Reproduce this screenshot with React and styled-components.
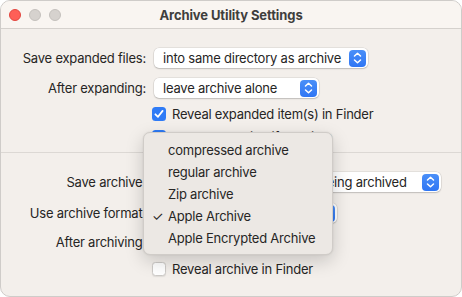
import React from "react";
import styled, { createGlobalStyle } from "styled-components";

const Global = createGlobalStyle`
  html, body {
    margin: 0;
    padding: 0;
    background: #ffffff;
  }
  body {
    font-family: "Inter", "Noto Sans", sans-serif;
    -webkit-font-smoothing: antialiased;
  }
`;

function Stepper() {
  return (
    <StepIcon>
      <svg width="17" height="18" viewBox="0 0 17 18">
        <path
          d="M5.5 7 L8.5 4.2 L11.5 7"
          fill="none"
          stroke="#fff"
          strokeWidth="1.5"
          strokeLinecap="round"
          strokeLinejoin="round"
        />
        <path
          d="M5.5 11 L8.5 13.8 L11.5 11"
          fill="none"
          stroke="#fff"
          strokeWidth="1.5"
          strokeLinecap="round"
          strokeLinejoin="round"
        />
      </svg>
    </StepIcon>
  );
}

function Popup({ width, children }) {
  return (
    <PopupButton $width={width}>
      <span>{children}</span>
      <Stepper />
    </PopupButton>
  );
}

function Check({ checked, children }) {
  return (
    <CheckRow>
      <Box $checked={checked}>
        {checked && (
          <svg width="14" height="14" viewBox="0 0 14 14">
            <path
              d="M3.4 7.3 L6 9.8 L10.6 3.9"
              fill="none"
              stroke="#fff"
              strokeWidth="1.8"
              strokeLinecap="round"
              strokeLinejoin="round"
            />
          </svg>
        )}
      </Box>
      <span>{children}</span>
    </CheckRow>
  );
}

const formats = [
  "compressed archive",
  "regular archive",
  "Zip archive",
  "Apple Archive",
  "Apple Encrypted Archive",
];

export default function App() {
  return (
    <>
      <Global />
      <Window>
        <TitleBar>
          <Lights>
            <Light $color="#fe5f57" $border="#e2463f" />
            <Light $color="#d6d2ce" $border="#c4c0bc" />
            <Light $color="#d6d2ce" $border="#c4c0bc" />
          </Lights>
          <Title>Archive Utility Settings</Title>
        </TitleBar>

        <Body>
          <Row $top={19}>
            <Label>Save expanded files:</Label>
            <Popup width={214}>into same directory as archive</Popup>
          </Row>
          <Row $top={10}>
            <Label>After expanding:</Label>
            <Popup width={165}>leave archive alone</Popup>
          </Row>
          <Row $top={6}>
            <Label />
            <Check checked>Reveal expanded item(s) in Finder</Check>
          </Row>
          <Row $top={3}>
            <Label />
            <Check checked>Keep expanding if possible</Check>
          </Row>

          <Separator />

          <Row $top={19}>
            <Label>Save archive:</Label>
            <Popup width={287}>into same directory as file being archived</Popup>
          </Row>
          <Row $top={11}>
            <Label>Use archive format:</Label>
            <Popup width={183}>Apple Archive</Popup>
          </Row>
          <Row $top={9}>
            <Label>After archiving:</Label>
            <Popup width={150}>leave file alone</Popup>
          </Row>
          <Row $top={7}>
            <Label />
            <Check>Reveal archive in Finder</Check>
          </Row>
        </Body>

        <Menu>
          {formats.map((f) => (
            <MenuItem key={f}>
              <Tick>{f === "Apple Archive" ? "✓" : ""}</Tick>
              {f}
            </MenuItem>
          ))}
        </Menu>
      </Window>
    </>
  );
}

const Window = styled.div`
  position: relative;
  box-sizing: border-box;
  width: 462px;
  height: 297px;
  border: 1px solid #cfccc9;
  border-radius: 10px;
  background: #f3efeb;
  overflow: hidden;
  color: #262524;
  font-size: 13px;
  letter-spacing: -0.22px;
`;

const TitleBar = styled.div`
  position: relative;
  display: flex;
  align-items: center;
  justify-content: center;
  height: 27px;
  background: #f9f5f1;
  border-bottom: 1px solid #d5d1cd;
`;

const Lights = styled.div`
  position: absolute;
  left: 8px;
  top: 8px;
  display: flex;
  gap: 8px;
`;

const Light = styled.span`
  width: 12px;
  height: 12px;
  box-sizing: border-box;
  border-radius: 50%;
  background: ${(p) => p.$color};
  border: 0.5px solid ${(p) => p.$border};
`;

const Title = styled.div`
  font-weight: 700;
  font-size: 13px;
  letter-spacing: -0.1px;
  color: #3f3e3d;
`;

const Body = styled.div`
  display: flex;
  flex-direction: column;
`;

const Row = styled.div`
  display: flex;
  align-items: center;
  height: 20px;
  margin-top: ${(p) => p.$top}px;
`;

const Label = styled.div`
  width: 145px;
  flex-shrink: 0;
  margin-right: 8px;
  text-align: right;
  white-space: nowrap;
`;

const PopupButton = styled.div`
  box-sizing: border-box;
  width: ${(p) => p.$width}px;
  height: 20px;
  display: flex;
  align-items: center;
  justify-content: space-between;
  padding: 0 2px 0 9px;
  background: #ffffff;
  border-radius: 5px;
  box-shadow: 0 0 0 0.5px rgba(0, 0, 0, 0.12), 0 1px 1.5px rgba(0, 0, 0, 0.16);
  white-space: nowrap;
`;

const StepIcon = styled.span`
  display: flex;
  width: 17px;
  height: 17px;
  border-radius: 4px;
  background: linear-gradient(#4a8ff8, #2f76f4);
  align-items: center;
  justify-content: center;

  svg {
    display: block;
  }
`;

const CheckRow = styled.div`
  display: flex;
  align-items: center;
  gap: 6px;
  margin-left: -2px;
  white-space: nowrap;
`;

const Box = styled.span`
  box-sizing: border-box;
  display: flex;
  width: 14px;
  height: 14px;
  border-radius: 3.5px;
  background: ${(p) => (p.$checked ? "#2f7bf6" : "#ffffff")};
  border: ${(p) => (p.$checked ? "none" : "1px solid #cdcac7")};
  box-shadow: ${(p) => (p.$checked ? "none" : "0 0.5px 1px rgba(0,0,0,0.08)")};
`;

const Separator = styled.div`
  height: 1px;
  margin-top: 5px;
  background: #dcd8d4;
`;

const Menu = styled.div`
  position: absolute;
  left: 142px;
  top: 131px;
  width: 190px;
  box-sizing: border-box;
  padding: 6px 0 5px;
  background: #ece8e4;
  border: 0.5px solid #d0ccc8;
  border-radius: 7px;
  box-shadow: 0 6px 18px rgba(0, 0, 0, 0.18), 0 0 2px rgba(0, 0, 0, 0.1);
`;

const MenuItem = styled.div`
  display: flex;
  align-items: center;
  height: 22px;
  color: #272625;
  white-space: nowrap;
`;

const Tick = styled.span`
  width: 24px;
  padding-left: 8px;
  box-sizing: border-box;
  font-size: 13px;
`;
